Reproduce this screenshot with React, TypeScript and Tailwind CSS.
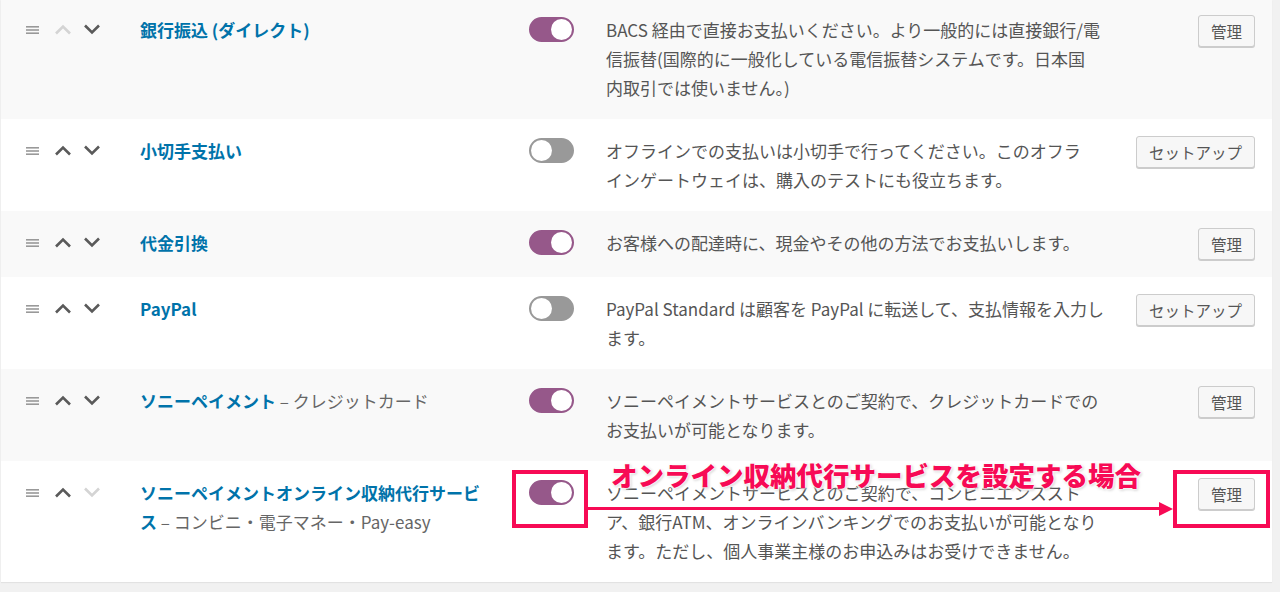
import React from "react";

const jp = "font-['Noto_Sans_CJK_JP','Noto_Sans',sans-serif]";

interface IMethod {
  title: string[];
  sub?: string;
  on: boolean;
  desc: string[];
  action: string;
  upOff?: boolean;
  downOff?: boolean;
  gray: boolean;
  first?: boolean;
}

const methods: IMethod[] = [
  {
    title: ["銀行振込 (ダイレクト)"],
    on: true,
    desc: [
      "BACS 経由で直接お支払いください。より一般的には直接銀行/電",
      "信振替(国際的に一般化している電信振替システムです。日本国",
      "内取引では使いません。)",
    ],
    action: "管理",
    upOff: true,
    gray: true,
    first: true,
  },
  {
    title: ["小切手支払い"],
    on: false,
    desc: [
      "オフラインでの支払いは小切手で行ってください。このオフラ",
      "インゲートウェイは、購入のテストにも役立ちます。",
    ],
    action: "セットアップ",
    gray: false,
  },
  {
    title: ["代金引換"],
    on: true,
    desc: ["お客様への配達時に、現金やその他の方法でお支払いします。"],
    action: "管理",
    gray: true,
  },
  {
    title: ["PayPal"],
    on: false,
    desc: [
      "PayPal Standard は顧客を PayPal に転送して、支払情報を入力し",
      "ます。",
    ],
    action: "セットアップ",
    gray: false,
  },
  {
    title: ["ソニーペイメント"],
    sub: "クレジットカード",
    on: true,
    desc: [
      "ソニーペイメントサービスとのご契約で、クレジットカードでの",
      "お支払いが可能となります。",
    ],
    action: "管理",
    gray: true,
  },
  {
    title: ["ソニーペイメントオンライン収納代行サービ", "ス"],
    sub: "コンビニ・電子マネー・Pay-easy",
    on: true,
    desc: [
      "ソニーペイメントサービスとのご契約で、コンビニエンススト",
      "ア、銀行ATM、オンラインバンキングでのお支払いが可能となり",
      "ます。ただし、個人事業主様のお申込みはお受けできません。",
    ],
    action: "管理",
    downOff: true,
    gray: false,
  },
];

function Chevron({ up, off }: { up?: boolean; off?: boolean }) {
  return (
    <svg width="18" height="11" viewBox="0 0 18 11" className="block">
      <path
        d={up ? "M2 9.5 L9 2.5 L16 9.5" : "M2 1.5 L9 8.5 L16 1.5"}
        fill="none"
        stroke={off ? "#d4d4d4" : "#5a5a5a"}
        strokeWidth="2.6"
      />
    </svg>
  );
}

function Toggle({ on }: { on: boolean }) {
  return (
    <span
      className={
        on
          ? "flex w-[45px] h-[25px] rounded-full border-2 border-[#96588a] bg-[#96588a] justify-end items-center"
          : "flex w-[45px] h-[25px] rounded-full border-2 border-[#999] bg-[#999] justify-start items-center"
      }
    >
      <span className="block w-[21px] h-[21px] rounded-full bg-white" />
    </span>
  );
}

function Row({ m }: { m: IMethod }) {
  return (
    <div
      className={
        (m.gray ? "bg-[#f9f9f9] " : "bg-white ") +
        (m.first ? "pt-[15px] " : "pt-[17px] ") +
        "flex pb-[17px] text-[17px] leading-[29px]"
      }
    >
      <div className="w-[139px] pl-[25px] flex items-center h-[29px] shrink-0">
        <svg width="13" height="8" viewBox="0 0 13 8" className="block mr-[15px]">
          <rect x="0" y="0" width="13" height="1.6" fill="#999" />
          <rect x="0" y="3.2" width="13" height="1.6" fill="#999" />
          <rect x="0" y="6.4" width="13" height="1.6" fill="#999" />
        </svg>
        <span className="mr-[11px]">
          <Chevron up off={m.upOff} />
        </span>
        <Chevron off={m.downOff} />
      </div>
      <div className="w-[389px] shrink-0 whitespace-nowrap">
        {m.title.map((t, i) => (
          <React.Fragment key={i}>
            {i > 0 && <br />}
            <span className="font-bold text-[#0073aa]">{t}</span>
          </React.Fragment>
        ))}
        {m.sub && <span className="text-[#666]"> – {m.sub}</span>}
      </div>
      <div className="w-[77px] shrink-0 pt-[2px]">
        <Toggle on={m.on} />
      </div>
      <div className="w-[512px] shrink-0 text-[#555] whitespace-nowrap">
        {m.desc.map((d, i) => (
          <div key={i}>{d}</div>
        ))}
      </div>
      <div className="flex-1 flex justify-end pr-[17px]">
        <button className="h-[32px] px-[12px] border border-[#ccc] rounded-[3px] bg-[#f7f7f7] text-[#555] text-[15.5px] leading-[30px] shadow-[0_1px_0_#ccc]">
          {m.action}
        </button>
      </div>
    </div>
  );
}

function Callout() {
  return (
    <div className="absolute inset-0 pointer-events-none">
      <div className="absolute left-[511px] top-[9px] w-[76px] h-[58px] border-[4px] border-[#f70a55]" />
      <div className="absolute left-[1172px] top-[9px] w-[97px] h-[58px] border-[4px] border-[#f70a55]" />
      <div className="absolute left-[587px] top-[46px] w-[572px] h-[3px] bg-[#f70a55]" />
      <svg width="14" height="14" viewBox="0 0 14 14" className="absolute left-[1158px] top-[40.5px]">
        <path d="M0 0 L14 7 L0 14 Z" fill="#f70a55" />
      </svg>
      <div className="absolute left-[610px] top-[-3px] text-[26.5px] leading-[34px] font-black text-[#f70a55] whitespace-nowrap [text-shadow:0_0_2px_#fff,0_0_2px_#fff,0_0_3px_#fff,0_0_4px_#fff,1px_1px_3px_rgba(0,0,0,0.35)]">
        オンライン収納代行サービスを設定する場合
      </div>
    </div>
  );
}

export default function App() {
  return (
    <div className={"w-[1280px] h-[592px] overflow-hidden bg-[#f1f1f1] " + jp}>
      <div className="ml-[1px] w-[1271px] bg-white shadow-[0_1px_1px_rgba(0,0,0,0.06)]">
        {methods.map((m, i) =>
          i === methods.length - 1 ? (
            <div key={i} className="relative">
              <Row m={m} />
              <Callout />
            </div>
          ) : (
            <Row key={i} m={m} />
          )
        )}
      </div>
    </div>
  );
}
